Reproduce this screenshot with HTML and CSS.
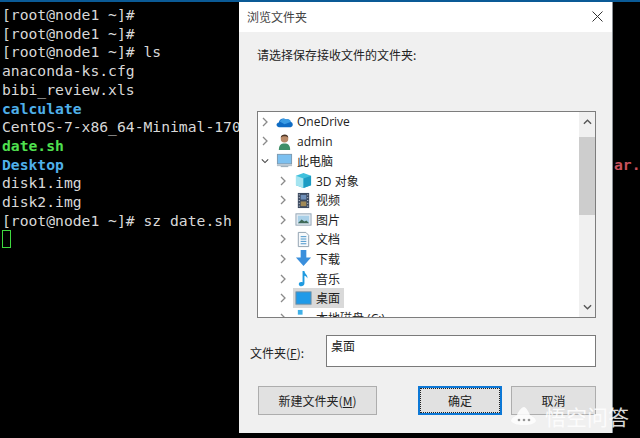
FILE: index.html
```html
<!DOCTYPE html>
<html lang="zh">
<head>
<meta charset="utf-8">
<title>浏览文件夹</title>
<link rel="stylesheet" href="styles.css">
</head>
<body>
<div class="screen">
  <pre class="term"><span>[root@node1 ~]# </span>
<span>[root@node1 ~]# </span>
<span>[root@node1 ~]# ls</span>
<span>anaconda-ks.cfg</span>
<span>bibi_review.xls</span>
<b class="dir">calculate</b>
<span>CentOS-7-x86_64-Minimal-1708.iso</span>
<b class="exe">date.sh</b>
<b class="dir">Desktop</b>
<span>disk1.img</span>
<span>disk2.img</span>
<span>[root@node1 ~]# sz date.sh</span>
<i class="cursor"></i></pre>
  <span class="red">ar.</span>

  <section class="dialog">
    <header class="titlebar">
      <span>浏览文件夹</span>
      <svg class="close" width="11" height="11" viewBox="0 0 11 11"><path d="M.5.5l10 10M10.500.5l-10 10" stroke="#333" stroke-width="1" fill="none"/></svg>
    </header>
    <div class="body">
      <p class="prompt">请选择保存接收文件的文件夹:</p>
      <div class="treebox">
        <ul class="tree">
          <li class="row">
            <svg class="chev" viewBox="0 0 8 10"><path d="M2 1l4 4-4 4"/></svg>
            <svg class="ico" viewBox="0 0 18 18"><path d="M3 15c-3 0-3.500-4.500 0-5 .5-3.500 5-5.500 7.500-3 2.500-1 5 .5 5 2.500 3 0 3 5.500 0 5.500z" fill="#0f6cc4"/><path d="M4 9c1-2.500 4.500-4 6.500-2 2.500-1 5 .5 5 2.500L9 12z" fill="#3a9ce4"/></svg>
            <span>OneDrive</span>
          </li>
          <li class="row">
            <svg class="chev" viewBox="0 0 8 10"><path d="M2 1l4 4-4 4"/></svg>
            <svg class="ico" viewBox="0 0 18 18"><path d="M3 18c0-5 2-7 6-7s6 2 6 7z" fill="#3f8f68"/><circle cx="9" cy="6" r="4" fill="#b98a68"/><path d="M5 5c0-4 8-5 8 0-2-2-6-2-8 0z" fill="#4a3526"/></svg>
            <span>admin</span>
          </li>
          <li class="row">
            <svg class="chev" viewBox="0 0 10 8"><path d="M1 2l4 4 4-4"/></svg>
            <svg class="ico" viewBox="0 0 18 18"><rect x="1.500" y="2.500" width="15" height="10" fill="#7cc0f0" stroke="#7a98b0"/><rect x="1" y="13" width="16" height="2" fill="#b4c2cc"/><rect x="5" y="15" width="8" height="1" fill="#8fa2b0"/></svg>
            <span>此电脑</span>
          </li>
          <li class="row sub">
            <svg class="chev" viewBox="0 0 8 10"><path d="M2 1l4 4-4 4"/></svg>
            <svg class="ico" viewBox="0 0 18 18"><path d="M1 4l8-3 8 3v10l-8 3-8-3z" fill="#3fc0dc"/><path d="M1 4l8 3v10l-8-3z" fill="#a5e4f0"/><path d="M9 7l8-3v10l-8 3z" fill="#1d9cc4"/></svg>
            <span>3D 对象</span>
          </li>
          <li class="row sub">
            <svg class="chev" viewBox="0 0 8 10"><path d="M2 1l4 4-4 4"/></svg>
            <svg class="ico" viewBox="0 0 18 18"><rect x="3" y="1" width="12" height="16" fill="#3c4a60"/><rect x="6" y="3" width="6" height="5" fill="#6f8fb8"/><rect x="6" y="10" width="6" height="5" fill="#a08a58"/><path d="M4 3h1M4 6h1M4 9h1M4 12h1M4 15h1M13 3h1M13 6h1M13 9h1M13 12h1M13 15h1" stroke="#dfe6ee"/></svg>
            <span>视频</span>
          </li>
          <li class="row sub">
            <svg class="chev" viewBox="0 0 8 10"><path d="M2 1l4 4-4 4"/></svg>
            <svg class="ico" viewBox="0 0 18 18"><rect x="1" y="3" width="16" height="12" fill="#e6edf3" stroke="#93a5b5"/><rect x="3" y="5" width="12" height="8" fill="#a9d0e8"/><path d="M3 13l4-4 3 2 2-1 3 3z" fill="#3f6a58"/></svg>
            <span>图片</span>
          </li>
          <li class="row sub">
            <svg class="chev" viewBox="0 0 8 10"><path d="M2 1l4 4-4 4"/></svg>
            <svg class="ico" viewBox="0 0 18 18"><path d="M3.500 1.500h8l3 3v12h-11z" fill="#f6f9fb" stroke="#8ea0ae"/><path d="M6 6h6M6 8.500h6M6 11h6M6 13.500h6" stroke="#3f8fc8"/></svg>
            <span>文档</span>
          </li>
          <li class="row sub">
            <svg class="chev" viewBox="0 0 8 10"><path d="M2 1l4 4-4 4"/></svg>
            <svg class="ico" viewBox="0 0 18 18"><path d="M6 0h6v8h5l-8 9-8-9h5z" fill="#3a8fdc"/></svg>
            <span>下载</span>
          </li>
          <li class="row sub">
            <svg class="chev" viewBox="0 0 8 10"><path d="M2 1l4 4-4 4"/></svg>
            <svg class="ico" viewBox="0 0 18 18"><path d="M8 1h2c0 3 4 4 3 8-.5-2-2-3-3-3v8c0 4-6 4-6 1 0-2 2-3 4-2z" fill="#1f9ae0"/></svg>
            <span>音乐</span>
          </li>
          <li class="row sub">
            <svg class="chev" viewBox="0 0 8 10"><path d="M2 1l4 4-4 4"/></svg>
            <span class="selected">
              <svg class="ico" viewBox="0 0 18 18"><rect x="1" y="2" width="16" height="13" fill="#1f9ae8" stroke="#6a8aa0"/><rect x="1" y="15" width="16" height="1" fill="#8ea4b4"/></svg>
              <span>桌面</span>
            </span>
          </li>
          <li class="row sub">
            <svg class="chev" viewBox="0 0 8 10"><path d="M2 1l4 4-4 4"/></svg>
            <svg class="ico" viewBox="0 0 18 18"><rect x="3" y="1" width="5" height="5" fill="#3fb0e8"/></svg>
            <span>本地磁盘 (C:)</span>
          </li>
        </ul>
        <div class="scrollbar">
          <svg class="arrow" viewBox="0 0 10 6"><path d="M1 5l4-4 4 4"/></svg>
          <div class="track"><div class="thumb"></div></div>
          <svg class="arrow" viewBox="0 0 10 6"><path d="M1 1l4 4 4-4"/></svg>
        </div>
      </div>
      <div class="field">
        <label class="field-label">文件夹(<u>F</u>):</label>
        <div class="input">桌面</div>
      </div>
      <div class="actions">
        <button class="btn new">新建文件夹(<u>M</u>)</button>
        <span class="spacer"></span>
        <button class="btn ok">确定</button>
        <button class="btn cancel">取消</button>
      </div>
    </div>
  </section>

  <div class="watermark">
    <svg width="27" height="20" viewBox="0 0 27 20"><path d="M1 15C2 11 5 11 7 9c2-5 5-8 7-8s4 4 6 8c2 2 5 2 6 6-2 3-6 4-12 4S3 18 1 15z" fill="#fff"/><circle cx="9" cy="14" r="1.300" fill="#888"/><circle cx="14" cy="14" r="1.300" fill="#888"/><circle cx="19" cy="14" r="1.300" fill="#888"/></svg>
    <span>悟空问答</span>
  </div>
</div>
</body>
</html>
```
FILE: styles.css
```css
* { box-sizing: border-box; }
html, body { margin: 0; padding: 0; background: #000; }
.screen {
  position: relative;
  width: 640px;
  height: 438px;
  overflow: hidden;
  background: #000;
  border-top: 2px solid #0a5a96;
}
.term {
  margin: 0;
  padding: 4px 0 0 2px;
  font-family: "DejaVu Sans Mono", monospace;
  font-size: 14.7px;
  line-height: 18.7px;
  color: #d8d8d8;
  white-space: pre;
}
.term .dir { color: #4fb0ea; }
.term .exe { color: #4fe04f; }
.cursor {
  display: inline-block;
  width: 9px;
  height: 18px;
  border: 1px solid #3fd83f;
  vertical-align: -4px;
}
.red {
  position: absolute;
  left: 614px;
  top: 154px;
  font: bold 14.7px "DejaVu Sans Mono", monospace;
  color: #c8505c;
}
.dialog {
  position: absolute;
  left: 239px;
  top: 0;
  width: 374px;
  height: 431px;
  background: #f0f0f0;
  border-right: 1px solid #8a8f94;
  font-family: "Noto Sans CJK SC", sans-serif;
  font-size: 12px;
  color: #222;
  display: flex;
  flex-direction: column;
}
.titlebar {
  height: 30px;
  flex: none;
  background: #fff;
  display: flex;
  align-items: center;
  justify-content: space-between;
  padding: 0 9px 2px 8px;
  color: #444;
}
.body {
  flex: 1;
  display: flex;
  flex-direction: column;
  padding: 0 16px 0 10px;
}
.prompt {
  margin: 14px 0 0 8px;
  height: 65px;
  line-height: 18px;
}
.treebox {
  height: 207px;
  margin-left: 8px;
  flex: none;
  background: #fff;
  border: 1px solid #7d7d7d;
  display: flex;
  overflow: hidden;
}
.tree {
  flex: 1;
  min-width: 0;
  list-style: none;
  margin: 0;
  padding: 0;
  overflow: hidden;
}
.row {
  display: flex;
  align-items: center;
  gap: 4px;
  height: 19.6px;
  padding-left: 3px;
  white-space: nowrap;
  font-family: "Open Sans", "Noto Sans CJK SC", sans-serif;
  font-size: 12px;
  color: #222;
}
.row.sub { padding-left: 21px; }
.chev { width: 8px; height: 10px; flex: none; margin-right: 3px; }
.row.sub > .chev { margin-right: 4px; }
.chev path, .arrow path { fill: none; stroke: #8a8a8a; stroke-width: 1.3; }
.row:nth-child(3) .chev path { stroke: #444; }
.ico { width: 17px; height: 17px; flex: none; }
.selected {
  display: flex;
  align-items: center;
  gap: 4px;
  background: #d9d9d9;
  height: 19.6px;
  padding: 0 4px 0 2px;
  margin-left: -2px;
}
.scrollbar {
  width: 16px;
  flex: none;
  margin-left: 1px;
  background: #f0f0f0;
  display: flex;
  flex-direction: column;
  align-items: center;
}
.arrow { width: 9px; height: 6px; margin: 7px 0; flex: none; }
.arrow path { stroke: #555; stroke-width: 1.5; }
.track { flex: 1; width: 100%; }
.thumb { width: 100%; height: 78px; margin-top: 5px; background: #cdcdcd; }
.field {
  display: flex;
  align-items: center;
  margin-top: 18px;
  height: 30px;
}
.field-label { width: 77px; flex: none; padding-left: 1px; margin-top: 3px; }
.input {
  flex: 1;
  height: 32px;
  background: #fff;
  border: 1px solid #7a7a7a;
  padding: 1px 4px;
  line-height: 18px;
}
.actions {
  display: flex;
  margin-top: 20px;
  gap: 9px;
  padding-left: 9px;
}
.spacer { width: 23px; }
.btn {
  height: 29px;
  flex: none;
  background: #e1e1e1;
  border: 1px solid #adadad;
  font: inherit;
  color: #222;
  padding: 0;
}
.new { width: 119px; }
.ok { width: 84px; border: 2px solid #0d78d6; outline: 1px dotted #222; outline-offset: -3px; }
.cancel { width: 85px; }
.watermark {
  position: absolute;
  left: 510px;
  top: 401px;
  display: flex;
  align-items: center;
  gap: 8px;
  color: #fff;
  font-family: "Noto Sans CJK SC", sans-serif;
  font-size: 21px;
  line-height: 26px;
  opacity: .85;
}
```
